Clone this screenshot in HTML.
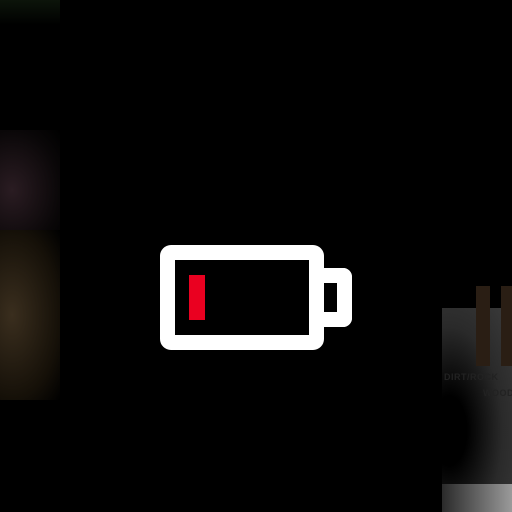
<!DOCTYPE html>
<html><head><style>
html,body{margin:0;padding:0;background:#000;width:512px;height:512px;overflow:hidden;position:relative}
div{position:absolute}
.t{font-family:"Liberation Sans",sans-serif;font-weight:bold;font-size:9px;color:#222;letter-spacing:0.5px}
</style></head><body>
<!-- left faint area -->
<div style="left:0;top:130px;width:60px;height:100px;background:radial-gradient(ellipse at 20% 60%,#2a1c22,#0a0708 70%,#000);"></div>
<div style="left:0;top:230px;width:60px;height:170px;background:radial-gradient(ellipse at 20% 50%,#3a2e1e,#151008 70%,#000);"></div>
<div style="left:0;top:0;width:60px;height:25px;background:linear-gradient(#0c140a,#000);"></div>
<!-- right faint area -->
<div style="left:442px;top:308px;width:70px;height:205px;background:radial-gradient(ellipse at 10% 60%,#000 20%,#2a2a2a 60%,#3c3c3c);"></div>
<div style="left:476px;top:286px;width:14px;height:80px;background:#2a1e14;"></div>
<div style="left:501px;top:286px;width:11px;height:80px;background:#2a1e14;"></div>
<div style="left:442px;top:484px;width:70px;height:28px;background:linear-gradient(90deg,#2a2a2a,#9a9a9a);"></div>
<div class="t" style="left:444px;top:372px;">DIRT/ROCK</div>
<div class="t" style="left:483px;top:388px;">WOOD</div>
<!-- battery -->
<div style="left:160px;top:245px;width:134px;height:75px;border:15px solid #fff;border-radius:11px;"></div>
<div style="left:322px;top:268px;width:15px;height:29px;border:15px solid #fff;border-left:none;border-radius:0 9px 9px 0;"></div>
<div style="left:189px;top:275px;width:16px;height:45px;background:#ea0020;"></div>
</body></html>
